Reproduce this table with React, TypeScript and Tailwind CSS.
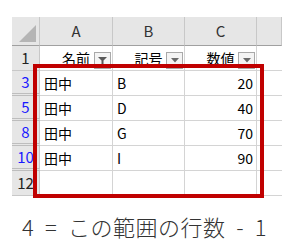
import React from "react";

const font = { fontFamily: '"Noto Sans CJK JP", "Liberation Sans", sans-serif' };

type Row = { n: string; a: string; b: string; c: string; hiddenAfter: boolean; blue: boolean };

const rows: Row[] = [
  { n: "3", a: "田中", b: "B", c: "20", hiddenAfter: true, blue: true },
  { n: "5", a: "田中", b: "D", c: "40", hiddenAfter: true, blue: true },
  { n: "8", a: "田中", b: "G", c: "70", hiddenAfter: true, blue: true },
  { n: "10", a: "田中", b: "I", c: "90", hiddenAfter: true, blue: true },
  { n: "12", a: "", b: "", c: "", hiddenAfter: false, blue: false },
];

function FilterButton({ active }: { active?: boolean }) {
  return (
    <div className="absolute right-[1px] bottom-[1px] w-[17px] h-[17px] border border-[#a9a9a9] bg-[#f4f4f4] flex items-center justify-center">
      {active ? (
        <svg width="9" height="9" viewBox="0 0 9 9">
          <path d="M0 1h9L5.5 4.5V8h-2V4.5z" fill="#595959" />
        </svg>
      ) : (
        <svg width="8" height="5" viewBox="0 0 8 5">
          <path d="M0 0h8L4 4.5z" fill="#6a6a6a" />
        </svg>
      )}
    </div>
  );
}

export default function App() {
  return (
    <div className="w-[305px] h-[250px] bg-white relative overflow-hidden" style={font}>
      <div className="pt-[17px] pl-[12px]">
        <div className="grid grid-cols-[28px_73px_72px_72px_25px] grid-rows-[29px_25px_25px_25px_25px_25px_25px]">
          {/* column header row */}
          <div className="bg-[#e6e6e6] border-r border-b border-[#c8c8c8] border-b-[#a0a0a0] relative">
            <svg className="absolute right-[3px] bottom-[3px]" width="17" height="17" viewBox="0 0 17 17">
              <path d="M17 0V17H0z" fill="#b5b5b5" />
            </svg>
          </div>
          {["A", "B", "C", ""].map((l, i) => (
            <div
              key={i}
              className="bg-[#e6e6e6] border-r border-b border-[#c8c8c8] border-b-[#a0a0a0] flex items-center justify-center text-[15px] text-[#333]"
            >
              {l}
            </div>
          ))}

          {/* row 1: table headings */}
          <div className="bg-[#e6e6e6] border-r border-b border-[#c8c8c8] flex items-center justify-center text-[15px] text-[#222]">
            1
          </div>
          <div className="relative border-r border-b border-[#d4d4d4] flex items-center justify-center text-[14px] text-black pt-[1px]">
            名前
            <FilterButton active />
          </div>
          <div className="relative border-r border-b border-[#d4d4d4] flex items-center justify-center text-[14px] text-black pt-[1px]">
            記号
            <FilterButton />
          </div>
          <div className="relative border-r border-b border-[#d4d4d4] flex items-center justify-center text-[14px] text-black pt-[1px]">
            数値
            <FilterButton />
          </div>
          <div className="border-b border-[#d4d4d4]" />

          {rows.map((r) => (
            <React.Fragment key={r.n}>
              <div
                className={`bg-[#e6e6e6] border-r border-[#c8c8c8] flex items-center justify-center text-[15px] ${
                  r.blue ? "text-[#1a1aff]" : "text-[#222]"
                } ${r.hiddenAfter ? "border-b-[3px] border-double border-b-[#bdbdbd]" : "border-b border-b-[#c8c8c8]"}`}
              >
                {r.n}
              </div>
              <div className="border-r border-b border-[#d4d4d4] flex items-center px-[4px] text-[14px] text-black">
                {r.a}
              </div>
              <div className="border-r border-b border-[#d4d4d4] flex items-center px-[4px] text-[14px] text-black">
                {r.b}
              </div>
              <div className="border-r border-b border-[#d4d4d4] flex items-center justify-end px-[3px] text-[14px] text-black">
                {r.c}
              </div>
              <div className="border-b border-[#d4d4d4]" />
            </React.Fragment>
          ))}
        </div>
      </div>

      {/* highlighted range */}
      <div className="absolute left-[33px] top-[64px] w-[231px] h-[134px] border-4 border-[#c00000]" />

      <div className="absolute left-[22px] top-[210px] text-[22px] font-light text-[#333] leading-[32px] tracking-[0.5px] whitespace-pre">
        {"4  =  この範囲の行数  -  1"}
      </div>
    </div>
  );
}
